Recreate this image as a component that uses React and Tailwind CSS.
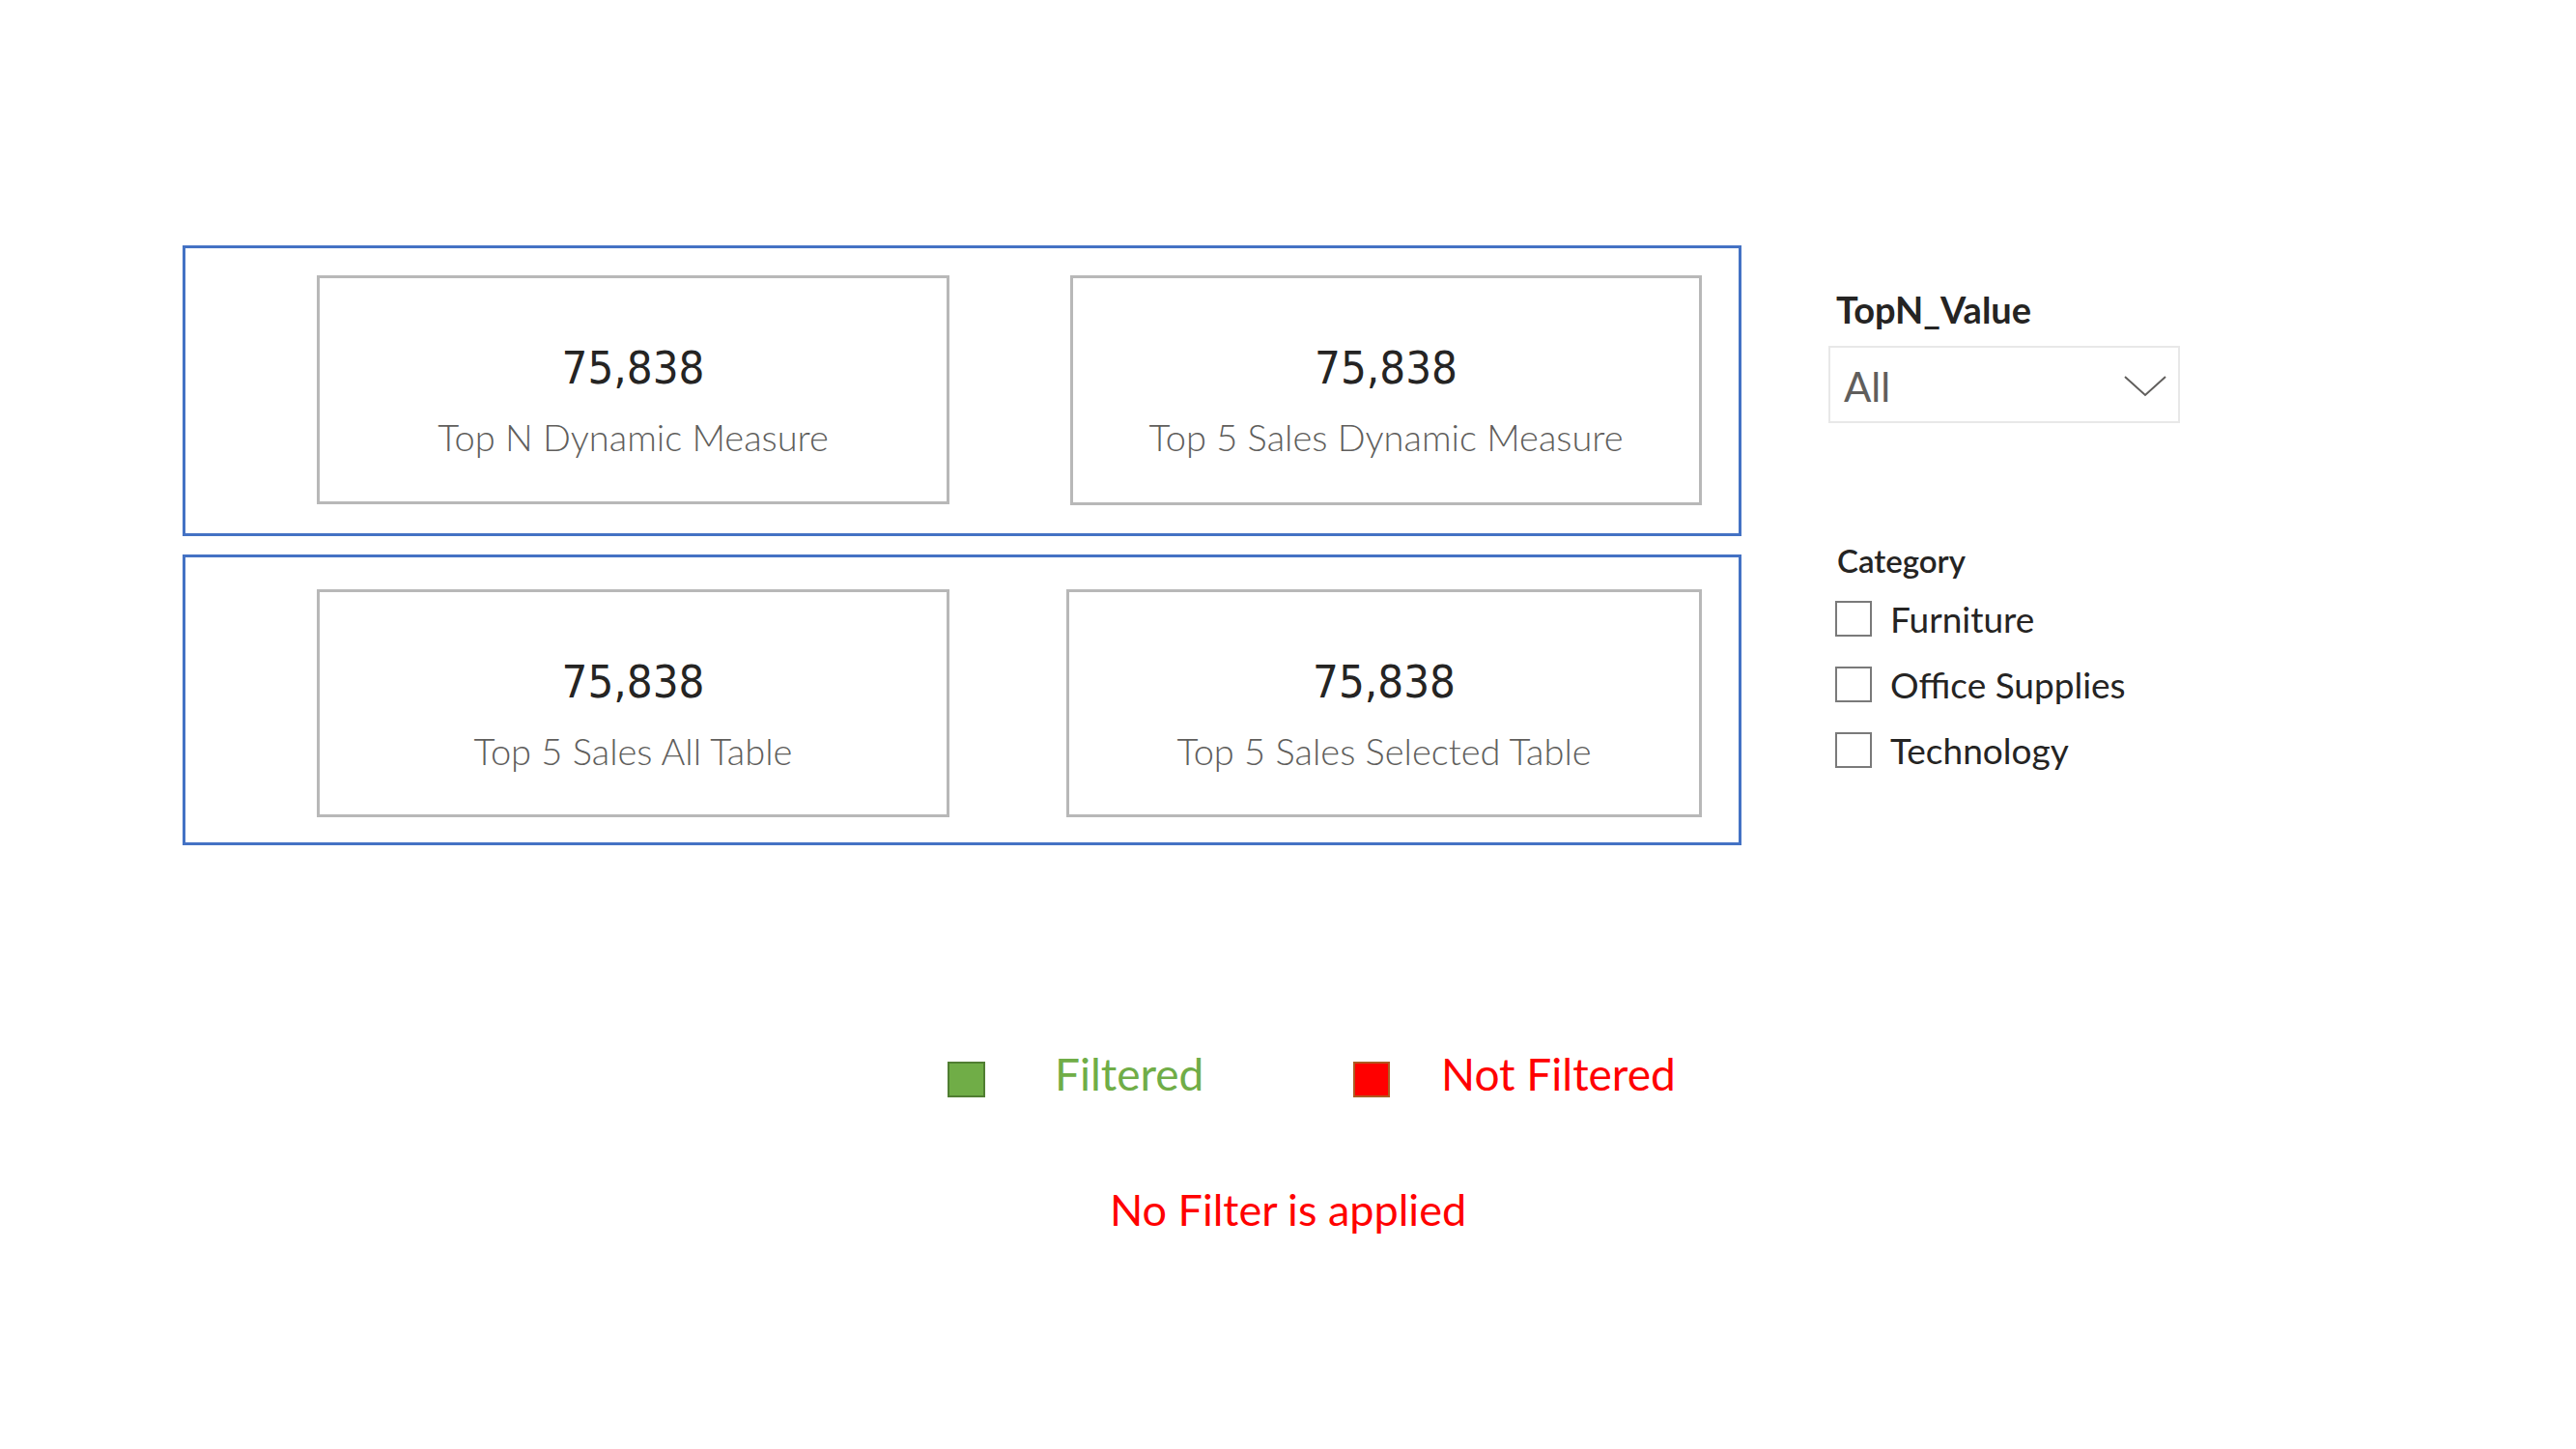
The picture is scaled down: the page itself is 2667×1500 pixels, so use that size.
const CARD_ROWS = [
  {
    pad: 'pt-[28px] pl-[136px]',
    gap: 'gap-[125px]',
    cards: [
      { label: 'Top N Dynamic Measure', w: 'w-[655px]', h: 'h-[237px]' },
      { label: 'Top 5 Sales Dynamic Measure', w: 'w-[654px]', h: 'h-[238px]' },
    ],
  },
  {
    pad: 'pt-[33px] pl-[136px]',
    gap: 'gap-[121px]',
    cards: [
      { label: 'Top 5 Sales All Table', w: 'w-[655px]', h: 'h-[236px]' },
      { label: 'Top 5 Sales Selected Table', w: 'w-[658px]', h: 'h-[236px]' },
    ],
  },
]

const CATEGORIES = ['Furniture', 'Office Supplies', 'Technology']

function KpiCard({ label, w, h }) {
  return (
    <div className={`${w} ${h} border-[3px] border-[#b8b8b8] bg-white flex flex-col items-center pt-[69px]`}>
      <div className="font-['DejaVu_Sans_Condensed','DejaVu_Sans',sans-serif] font-stretch-condensed text-[47px] leading-none text-[#252423]">
        75,838
      </div>
      <div className="mt-[29px] font-['Lato',sans-serif] font-light text-[38px] leading-none text-[#605e5c]">
        {label}
      </div>
    </div>
  )
}

function Chevron() {
  return (
    <svg width="44" height="22" viewBox="0 0 44 22" fill="none">
      <polyline points="1,1 22,20 43,1" stroke="#605e5c" strokeWidth="2" />
    </svg>
  )
}

export default function App() {
  return (
    <div className="w-[2667px] h-[1500px] bg-white overflow-hidden font-['Lato',sans-serif]">
      <div className="flex pt-[254px] pl-[189px]">
        {/* Card groups */}
        <div className="flex flex-col gap-[19px] w-[1614px]">
          {CARD_ROWS.map((row, i) => (
            <div key={i} className={`h-[301px] border-[3px] border-[#4472c4] flex ${row.gap} ${row.pad}`}>
              {row.cards.map(c => <KpiCard key={c.label} {...c} />)}
            </div>
          ))}
        </div>

        {/* Slicers */}
        <div className="ml-[90px] w-[364px] flex flex-col">
          <div className="mt-[47px] pl-[8px] font-bold text-[38px] leading-none text-[#252423]">TopN_Value</div>
          <div className="mt-[19px] h-[80px] border-2 border-[#e8e8e8] flex items-center justify-between pl-[14px] pr-[12px] pt-[4px]">
            <span className="text-[42px] leading-none text-[#605e5c]">All</span>
            <Chevron />
          </div>

          <div className="mt-[126px] pl-[9px] font-semibold text-[33px] leading-none text-[#252423]">Category</div>
          <div className="mt-[25px] flex flex-col gap-[31px] pl-[7px]">
            {CATEGORIES.map(c => (
              <div key={c} className="flex items-center h-[37px]">
                <div className="w-[38px] h-[37px] border-2 border-[#7a7a7a] bg-white" />
                <span className="ml-[19px] text-[37px] leading-none text-[#252423]">{c}</span>
              </div>
            ))}
          </div>
        </div>
      </div>

      {/* Legend */}
      <div className="mt-[214px] pl-[981px] flex items-start">
        <div className="mt-[10px] w-[39px] h-[37px] bg-[#70ad47] border-2 border-[#507e32]" />
        <div className="ml-[72px] w-[309px] text-[46px] leading-none text-[#70ad47]">Filtered</div>
        <div className="mt-[10px] w-[38px] h-[37px] bg-[#ff0000] border-2 border-[#ae5a21]" />
        <div className="ml-[53px] text-[46px] leading-none text-[#ff0000]">Not Filtered</div>
      </div>

      <div className="mt-[94px] text-center text-[45px] leading-none text-[#ff0000]">No Filter is applied</div>
    </div>
  )
}
